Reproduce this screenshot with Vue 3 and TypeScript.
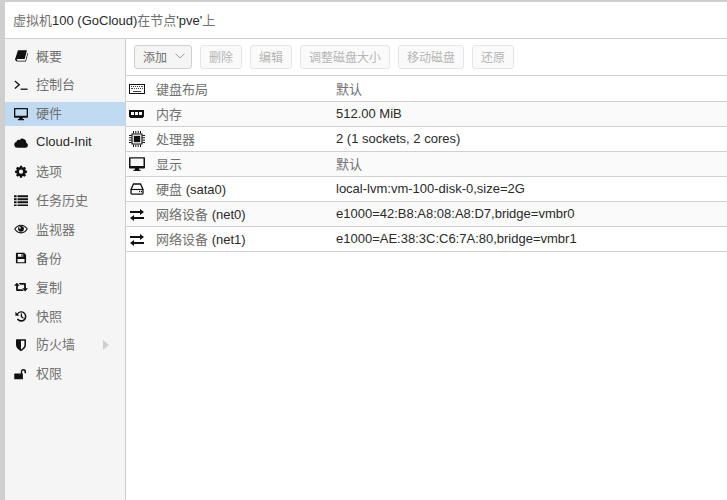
<script setup lang="ts">
interface Nav { icon: string; label: string; active?: boolean; arrow?: boolean }
interface Row { icon: string; key: string; value: string }
interface Seg { text: string; cjk: boolean }
const navs: Nav[] = [
  { icon: 'book', label: '概要' },
  { icon: 'term', label: '控制台' },
  { icon: 'desktop', label: '硬件', active: true },
  { icon: 'cloud', label: 'Cloud-Init' },
  { icon: 'gear', label: '选项' },
  { icon: 'list', label: '任务历史' },
  { icon: 'eye', label: '监视器' },
  { icon: 'save', label: '备份' },
  { icon: 'retweet', label: '复制' },
  { icon: 'history', label: '快照' },
  { icon: 'shield', label: '防火墙', arrow: true },
  { icon: 'unlock', label: '权限' },
]
const buttons = ['删除', '编辑', '调整磁盘大小', '移动磁盘', '还原']
const rows: Row[] = [
  { icon: 'keyboard', key: '键盘布局', value: '默认' },
  { icon: 'memory', key: '内存', value: '512.00 MiB' },
  { icon: 'cpu', key: '处理器', value: '2 (1 sockets, 2 cores)' },
  { icon: 'desktop', key: '显示', value: '默认' },
  { icon: 'hdd', key: '硬盘 (sata0)', value: 'local-lvm:vm-100-disk-0,size=2G' },
  { icon: 'exchange', key: '网络设备 (net0)', value: 'e1000=42:B8:A8:08:A8:D7,bridge=vmbr0' },
  { icon: 'exchange', key: '网络设备 (net1)', value: 'e1000=AE:38:3C:C6:7A:80,bridge=vmbr1' },
]
function segs(s: string): Seg[] {
  return s.split(/([\u4e00-\u9fff]+)/).filter(Boolean).map((text) => ({ text, cjk: /[\u4e00-\u9fff]/.test(text) }))
}
const title = "虚拟机100 (GoCloud)在节点'pve'上"
</script>

<template>
  <div class="page">
    <div class="window">
      <header class="title"><span v-for="(s, i) in segs(title)" :key="i" :class="{ cjk: s.cjk }">{{ s.text }}</span></header>
      <div class="body">
        <nav class="side">
          <div v-for="n in navs" :key="n.label" class="nav" :class="{ active: n.active }">
            <svg class="nav-icon" width="14" height="14" viewBox="0 0 16 16"><use :href="'#i-' + n.icon" /></svg>
            <span class="nav-label"><span v-for="(s, i) in segs(n.label)" :key="i" :class="{ cjk: s.cjk }">{{ s.text }}</span></span>
            <span v-if="n.arrow" class="arrow"></span>
          </div>
        </nav>
        <main class="main">
          <div class="toolbar">
            <button class="btn add">添加<svg class="chev" width="10" height="6" viewBox="0 0 10 6"><path d="M.5.7 5 5l4.500-4.300" fill="none" stroke="#9a9a9a" stroke-width="1" /></svg></button>
            <button v-for="b in buttons" :key="b" class="btn off">{{ b }}</button>
          </div>
          <div class="grid">
            <div v-for="r in rows" :key="r.key" class="row">
              <svg class="row-icon" width="16" height="16" viewBox="0 0 16 16"><use :href="'#i-' + r.icon" /></svg>
              <span class="row-key"><span v-for="(s, i) in segs(r.key)" :key="i" :class="{ cjk: s.cjk }">{{ s.text }}</span></span>
              <span class="row-val"><span v-for="(s, i) in segs(r.value)" :key="i" :class="{ cjk: s.cjk }">{{ s.text }}</span></span>
            </div>
          </div>
        </main>
      </div>
    </div>

    <svg class="defs" width="0" height="0" aria-hidden="true">
      <defs>
        <symbol id="i-book" viewBox="0 0 16 16"><path d="M4.500 1.500h10.300l-2.600 10H4.300c-.8 0-1.100.4-1.100.9s.3.9 1.100.9h8.800l2.200-8.800.7.500-2.300 9.400H3.800C2.200 13.900 1 13 1.300 11.500Z" fill="#111" /></symbol>
        <symbol id="i-term" viewBox="0 0 16 16"><path d="m1 3.500 5 4.200-5 4.200" fill="none" stroke="#111" stroke-width="1.500" /><path d="M7.500 12.800h8" stroke="#111" stroke-width="1.500" /></symbol>
        <symbol id="i-desktop" viewBox="0 0 16 16"><path fill-rule="evenodd" d="M.8 1.200h14.400a.8.800 0 0 1 .8.800v9.500a.9.900 0 0 1-.9.900H10v1.400h1.500v1.200h-7v-1.200H6v-1.400H.9a.9.900 0 0 1-.9-.9V2a.8.800 0 0 1 .8-.8Zm.7 1.400v7.500h13V2.600Z" fill="#111" /></symbol>
        <symbol id="i-cloud" viewBox="0 0 16 16"><path d="M3.800 13.500A3.600 3.600 0 0 1 2.700 6.500 3 3 0 0 1 6.400 4.600 4.300 4.300 0 0 1 14 7.700 3 3 0 0 1 13 13.500Z" fill="#111" /></symbol>
        <symbol id="i-gear" viewBox="0 0 16 16"><g transform="translate(1.300 .6) scale(.84)"><path fill-rule="evenodd" d="M6.600 1h2.800l.4 2 1.300.5 1.700-1.100 2 2-1.100 1.700.5 1.300 2 .4v2.800l-2 .4-.5 1.300 1.100 1.700-2 2-1.700-1.100-1.300.5-.4 2H6.600l-.4-2-1.300-.5-1.700 1.100-2-2 1.100-1.700-.5-1.300-2-.4V7.800l2-.4.5-1.300-1.100-1.700 2-2 1.700 1.100 1.300-.5ZM8 6.300a2.900 2.900 0 1 0 0 5.800 2.900 2.900 0 0 0 0-5.800Z" fill="#111" transform="translate(0 -.8)" /></g></symbol>
        <symbol id="i-list" viewBox="0 0 16 16"><path d="M0 2.500h3v2.300H0Zm0 3.500h3v2.300H0Zm0 3.500h3v2.300H0ZM4 2.500h12v2.300H4Zm0 3.500h12v2.300H4Zm0 3.500h12v2.300H4Z" fill="#111" /><path d="M0 13h3v1.800H0Zm4 0h12v1.800H4Z" fill="#111" /></symbol>
        <symbol id="i-eye" viewBox="0 0 16 16"><path fill-rule="evenodd" d="M8 3C4.700 3 1.800 5 .2 8c1.600 3 4.500 5 7.800 5s6.200-2 7.800-5C14.200 5 11.300 3 8 3Zm0 1.200c2.700 0 5 1.500 6.400 3.800-1.400 2.300-3.700 3.800-6.400 3.800S3 10.300 1.600 8C3 5.700 5.300 4.200 8 4.200Z" fill="#111" /><circle cx="8" cy="7.800" r="3.300" fill="#111" /><circle cx="6.800" cy="6.600" r="1" fill="#fff" /></symbol>
        <symbol id="i-save" viewBox="0 0 16 16"><path fill-rule="evenodd" d="M2.500 2h9l2.300 2.300v9a.8.800 0 0 1-.8.800H3a.8.800 0 0 1-.8-.8V2.300a.3.300 0 0 1 .3-.3Zm2 1.300v3.400h6V3.300Zm4 .4h1.300v2.500H8.500ZM4 9v3.800h8V9Z" fill="#111" /></symbol>
        <symbol id="i-retweet" viewBox="0 0 16 16"><path d="M3.300 3 6.600 6.600H4.500V10.500H9.500L11.200 12.500H3.300C2.800 12.500 2.400 12.100 2.400 11.600V6.600H0Z" fill="#111" /><path d="M5.300 3.500H12.700C13.200 3.500 13.600 3.900 13.600 4.400V9.400H16L12.700 13 9.400 9.400H11.500V5.500H7Z" fill="#111" /></symbol>
        <symbol id="i-history" viewBox="0 0 16 16"><path d="M3.400 5A6 6 0 1 1 3.300 12l1.300-1.200a4.300 4.300 0 1 0 0-4.800l1.600 1.600H1.600V3Z" fill="#111" /><path d="M7.700 5h1.500v3.400l2 1.500-.8 1.100-2.700-2Z" fill="#111" /></symbol>
        <symbol id="i-shield" viewBox="0 0 16 16"><path fill-rule="evenodd" d="M3 1.500h10c.4 0 .7.300.7.700V8c0 3.500-3.700 6-5.700 7-2-1-5.700-3.500-5.700-7V2.200c0-.4.300-.7.700-.7ZM8 3.200V13c1.600-.9 3.900-2.800 3.900-5V3.200Z" fill="#111" /></symbol>
        <symbol id="i-unlock" viewBox="0 0 16 16"><path d="M1 7.500h8.500c.4 0 .7.300.7.700v5.100c0 .4-.3.700-.7.700H1c-.4 0-.7-.3-.7-.7V8.200c0-.4.300-.7.700-.7Z" fill="#111" /><path d="M7.800 8V5.200a3 3 0 0 1 6 0v2h-1.800v-2a1.300 1.300 0 0 0-2.600 0V8Z" fill="#111" /></symbol>
        <symbol id="i-keyboard" viewBox="0 0 16 16"><path fill-rule="evenodd" d="M0 3h16v10H0Zm1 1v8h14V4Z" fill="#111" /><path d="M2 5h12v1H2Zm0 2h12v1H2Zm2 3h8v1H4Z" fill="#444" /><path d="M3 5h1v1H3Zm2 0h1v1H5Zm2 0h1v1H7Zm2 0h1v1H9Zm2 0h1v1h-1ZM4 7h1v1H4Zm2 0h1v1H6Zm2 0h1v1H8Zm2 0h1v1h-1Zm2 0h1v1h-1Z" fill="#fff" /></symbol>
        <symbol id="i-memory" viewBox="0 0 16 16"><path fill-rule="evenodd" d="M0 4h15v7h-1v1H1v-1H0Zm2 2v3h3V6Zm4 0v3h3V6Zm4 0v3h3V6Z" fill="#111" /></symbol>
        <symbol id="i-cpu" viewBox="0 0 16 16"><path d="M3 3h10v10H3Z" fill="none" stroke="#111" stroke-width="1.200" /><path d="M4.800 4.800h6.400v6.400H4.800Z" fill="#111" /><path d="M4.500 0v2.500m2.300-2.500v2.500m2.400-2.500v2.500m2.300-2.500v2.500M4.500 13.500V16m2.300-2.500V16m2.400-2.500V16m2.300-2.500V16M0 4.500h2.500M0 6.800h2.500M0 9.200h2.500M0 11.500h2.500m11-7H16m-2.500 2.300H16m-2.500 2.400H16m-2.500 2.300H16" stroke="#111" stroke-width="1" /></symbol>
        <symbol id="i-hdd" viewBox="0 0 16 16"><path d="M4.500 3h7l2.500 5.500v3.800c0 .5-.4.800-.8.800H2.800c-.4 0-.8-.3-.8-.8V8.500Z" fill="none" stroke="#111" stroke-width="1.300" /><path d="M2.200 8.500h11.600" stroke="#111" stroke-width="1.200" /><path d="M10 10h1.200v1.200H10Zm2 0h1v1.200h-1Z" fill="#111" /></symbol>
        <symbol id="i-exchange" viewBox="0 0 16 16"><path d="M1 5h10V3l4 3-4 3V7H1Z" fill="#111" /><path d="M15 11H5V9l-4 3 4 3v-2h10Z" fill="#111" /></symbol>
      </defs>
    </svg>
  </div>
</template>

<style>
html, body { margin: 0; padding: 0; background: #fff; overflow: hidden; }
</style>

<style scoped>
.page {
  width: 727px;
  height: 500px;
  box-sizing: border-box;
  background: #cfcfcf;
  padding: 2px 0 0 5px;
  font-family: "Liberation Sans", "Noto Sans CJK SC", sans-serif;
  font-size: 13px;
  color: #2a2a2a;
}
.cjk { color: #707070; }
.window { height: 498px; background: #fff; display: flex; flex-direction: column; }
.title {
  height: 35px;
  line-height: 35px;
  padding: 1px 0 0 8px;
  font-size: 13px;
  border-bottom: 1px solid #cfcfcf;
}
.body { flex: 1; display: flex; min-height: 0; }
.side {
  width: 121px;
  box-sizing: border-box;
  background: #f5f5f5;
  border-right: 1px solid #cfcfcf;
  padding-top: 5px;
  flex: none;
  display: flex;
  flex-direction: column;
  gap: 4.900px;
}
.nav { height: 24px; flex: none; display: flex; align-items: center; position: relative; }
.nav.active { background: #c0dbf1; }
.nav-icon { margin-left: 9px; display: block; flex: none; }
.nav-label { margin-left: 8px; padding-bottom: 2px; }
.arrow {
  position: absolute;
  left: 98px;
  top: 7px;
  border-left: 6px solid #cfcfcf;
  border-top: 5px solid transparent;
  border-bottom: 5px solid transparent;
}
.main { flex: 1; min-width: 0; display: flex; flex-direction: column; }
.toolbar {
  height: 36px;
  border-bottom: 1px solid #cfcfcf;
  display: flex;
  align-items: center;
  gap: 8px;
  padding-left: 8px;
}
.btn {
  height: 24px;
  box-sizing: border-box;
  padding: 0 8px 2px;
  border-radius: 3px;
  font: inherit;
  font-size: 12px;
  display: flex;
  align-items: center;
  white-space: nowrap;
}
.add { width: 58px; background: #f5f5f5; border: 1px solid #cfcfcf; color: #707070; }
.chev { margin-left: 8px; flex: none; }
.off { background: #fafafa; border: 1px solid #e6e6e6; color: #b5b5b5; }
.grid { padding-top: 1px; }
.row {
  height: 25px;
  box-sizing: border-box;
  border-bottom: 1px solid #cfcfcf;
  display: flex;
  align-items: center;
}
.row:nth-child(even) { background: #fafafa; }
.row-icon { margin-left: 3px; display: block; flex: none; }
.row-key { width: 180px; margin-left: 11px; padding-bottom: 2px; white-space: nowrap; flex: none; }
.row-val { padding-bottom: 2px; white-space: nowrap; }
.defs { position: absolute; }
</style>
